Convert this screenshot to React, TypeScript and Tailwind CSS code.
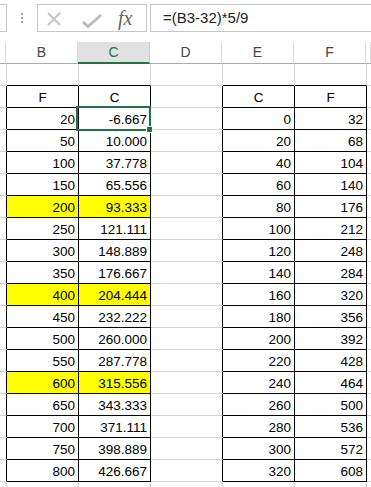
import React from 'react';

const colW = ['w-[6px] shrink-0', 'w-[72px] shrink-0', 'w-[72px] shrink-0', 'w-[72px] shrink-0', 'w-[72px] shrink-0', 'w-[72px] shrink-0', 'flex-1'];
const letters = ['', 'B', 'C', 'D', 'E', 'F', ''];

const leftF = [20, 50, 100, 150, 200, 250, 300, 350, 400, 450, 500, 550, 600, 650, 700, 750, 800];
const yellow = [200, 400, 600];

// sheet rows 1..20, table occupies rows 2..19 in columns B,C and E,F
function inTable(r: number, c: number) {
  return r >= 2 && r <= 19 && [1, 2, 4, 5].includes(c);
}

function cellContent(r: number, c: number): { text: string; center: boolean; hl: boolean } {
  if (!inTable(r, c)) return { text: '', center: false, hl: false };
  if (r === 2) {
    const h = c === 1 ? 'F' : c === 2 ? 'C' : c === 4 ? 'C' : 'F';
    return { text: h, center: true, hl: false };
  }
  const i = r - 3;
  if (c === 1 || c === 2) {
    const f = leftF[i];
    const hl = yellow.includes(f);
    if (c === 1) return { text: String(f), center: false, hl };
    return { text: (((f - 32) * 5) / 9).toFixed(3), center: false, hl };
  }
  const cv = i * 20;
  if (c === 4) return { text: String(cv), center: false, hl: false };
  return { text: String((cv * 9) / 5 + 32), center: false, hl: false };
}

function FormulaBar() {
  return (
    <div className="h-[42px] flex items-start pt-[4px] bg-white">
      <div className="w-[7px] h-[28px] shrink-0 border border-l-0 border-[#c6c6c6]" />
      <div className="w-[30px] h-[28px] shrink-0 flex flex-col items-center justify-center gap-[2px]">
        <div className="w-[2px] h-[2px] bg-[#a6a6a6]" />
        <div className="w-[2px] h-[2px] bg-[#a6a6a6]" />
        <div className="w-[2px] h-[2px] bg-[#a6a6a6]" />
      </div>
      <div className="w-[110px] h-[28px] shrink-0 border border-[#c6c6c6] flex items-center">
        <svg width="110" height="26" viewBox="0 0 110 26" className="shrink-0">
          <path d="M10 8 L22 20 M22 8 L10 20" stroke="#c4c4c4" strokeWidth="2" fill="none" />
          <path d="M45 17 L50 21.5 L63 10" stroke="#bcbcbc" strokeWidth="3" fill="none" strokeLinejoin="miter" />
          <text x="80" y="20" fontFamily="'Liberation Serif', serif" fontStyle="italic" fontSize="20" fill="#666666">fx</text>
        </svg>
      </div>
      <div className="w-[3px] shrink-0" />
      <div className="flex-1 h-[28px] border border-r-0 border-[#c6c6c6] pl-[12px] flex items-center text-[15px] text-[#222] font-['Liberation_Sans',Arial,sans-serif]">
        =(B3-32)*5/9
      </div>
    </div>
  );
}

function HeaderRow() {
  return (
    <div className="flex h-[22px] font-['Liberation_Sans',Arial,sans-serif] text-[14px]">
      {colW.map((w, c) =>
        c === 2 ? (
          <div key={c} className={`${w} h-[22px] bg-[#e1e1e1] border-b-2 border-b-[#217346] border-r border-r-[#d0d0d0] flex items-center justify-center text-[#217346]`}>
            {letters[c]}
          </div>
        ) : (
          <div key={c} className={`${w} h-[22px] border-b border-b-[#ababab] border-r border-r-[#dadada] flex items-center justify-center text-[#444]`}>
            {letters[c]}
          </div>
        )
      )}
    </div>
  );
}

function SheetRow({ r }: { r: number }) {
  return (
    <div className="flex">
      {colW.map((w, c) => {
        const { text, center, hl } = cellContent(r, c);
        const rb = inTable(r, c) || inTable(r, c + 1);
        const bb = inTable(r, c) || inTable(r + 1, c);
        return (
          <div
            key={c}
            className={`${w} h-[22px] border-r border-b ${rb ? 'border-r-black' : 'border-r-[#d4d4d4]'} ${bb ? 'border-b-black' : 'border-b-[#d4d4d4]'} ${hl ? 'bg-[#ffff00]' : 'bg-white'} ${center ? 'text-center' : 'text-right'} px-[3px] pt-[1px] text-[13.5px] leading-[21px] text-black whitespace-nowrap overflow-hidden`}
          >
            {text}
          </div>
        );
      })}
    </div>
  );
}

export default function App() {
  const rows = Array.from({ length: 20 }, (_, i) => i + 1);
  return (
    <div className="relative w-[371px] h-[487px] overflow-hidden bg-white font-['Liberation_Sans',Arial,sans-serif]">
      <FormulaBar />
      <HeaderRow />
      {rows.map((r) => (
        <SheetRow key={r} r={r} />
      ))}
      {/* active cell C3 */}
      <div className="absolute left-[76px] top-[106px] w-[75px] h-[25px] border-2 border-[#217346] pointer-events-none" />
      <div className="absolute left-[146px] top-[126px] w-[7px] h-[7px] bg-[#217346] border border-white pointer-events-none" />
    </div>
  );
}
